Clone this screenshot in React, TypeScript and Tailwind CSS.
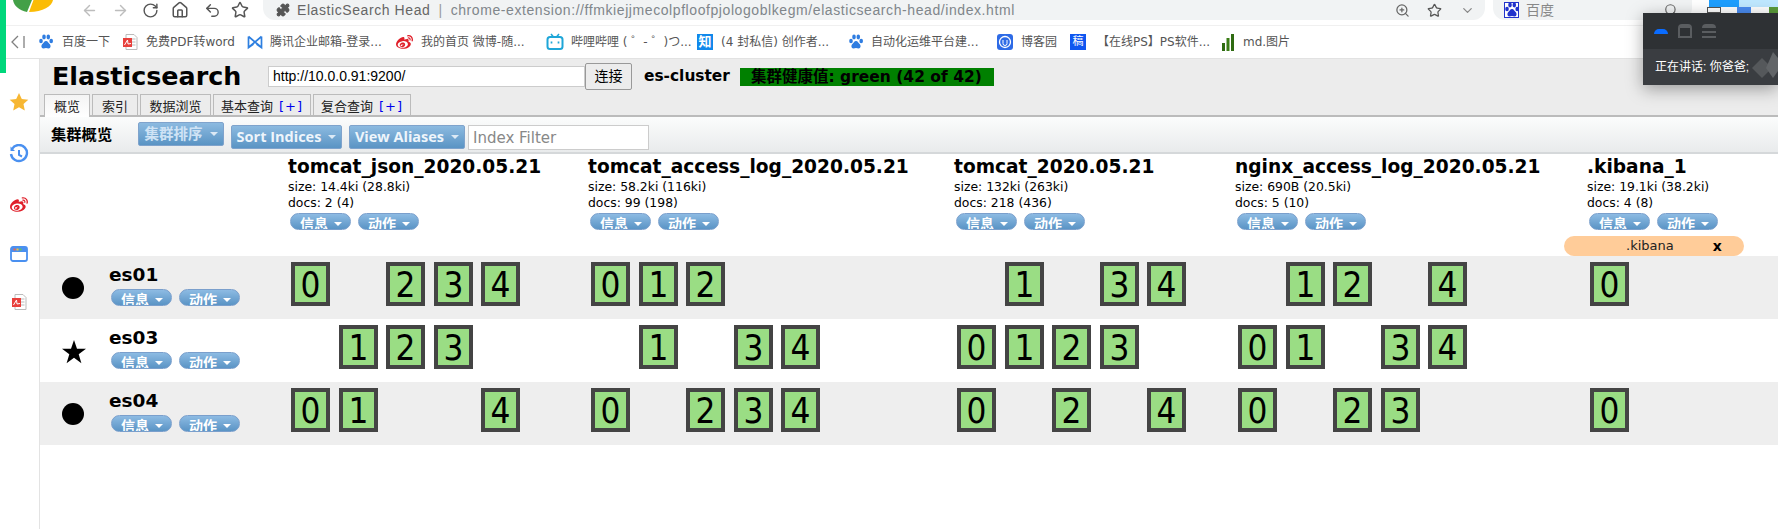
import React from "react";
import { ArrowLeft, ArrowRight, RotateCw, Home, Undo2, Star, Puzzle, ZoomIn, ChevronDown, Search } from "lucide-react";
import { FaWeibo } from "react-icons/fa";

const Paw = ({ c = "#2f7de1" }: { c?: string }) => (
  <svg viewBox="0 0 16 16" className="w-4 h-4 shrink-0">
    <ellipse cx="3" cy="7" rx="1.8" ry="2.3" fill={c} />
    <ellipse cx="6" cy="3" rx="1.8" ry="2.4" fill={c} />
    <ellipse cx="10.3" cy="3" rx="1.8" ry="2.4" fill={c} />
    <ellipse cx="13.2" cy="7" rx="1.8" ry="2.3" fill={c} />
    <path d="M8 7c-2 0-2.2 2-3.6 3-1.4 1-1.4 4.500 1.100 4.500 1 0 1.500-.4 2.500-.4s1.500.4 2.500.4c2.500 0 2.500-3.500 1.100-4.500C10.200 9 10 7 8 7z" fill={c} />
  </svg>
);
const Pdf = () => (
  <svg viewBox="0 0 16 16" className="w-4 h-4 shrink-0">
    <path d="M4 .5h8l3 3v12H4z" fill="#fff" stroke="#bbb" />
    <path d="M10 5h3.500M10 8h3.500M10 11h3.500" stroke="#bbb" />
    <rect x="1" y="4" width="9" height="9" fill="#e8403c" />
    <path d="M2.500 11l3-5 .5 4 3-.5" stroke="#fff" fill="none" />
  </svg>
);
const Tencent = () => (
  <svg viewBox="0 0 16 16" className="w-4 h-4 shrink-0">
    <path d="M1.500 2.500v11l5-3.500M14.500 2.500v11l-5-3.500M1.500 2.500l13 11M14.500 2.500l-13 11" stroke="#2e7fe0" strokeWidth="1.700" fill="none" />
  </svg>
);
const Bili = () => (
  <svg viewBox="0 0 18 18" className="w-[18px] h-[18px] shrink-0">
    <path d="M5 1l2.500 3M13 1l-2.500 3" stroke="#1ea6d8" strokeWidth="1.500" />
    <rect x="1.500" y="4" width="15" height="12" rx="2.500" fill="none" stroke="#1ea6d8" strokeWidth="2" />
    <path d="M5.500 8.500v2M12.500 8.500v2" stroke="#1ea6d8" strokeWidth="1.700" />
  </svg>
);
const Zhihu = () => (
  <div className="w-4 h-4 shrink-0 bg-[#0f88eb] text-white text-[13px] leading-4 text-center font-bold">知</div>
);
const Cnb = () => (
  <svg viewBox="0 0 16 16" className="w-4 h-4 shrink-0">
    <rect width="16" height="16" rx="3" fill="#2e6be6" />
    <circle cx="8" cy="8" r="5.500" fill="none" stroke="#fff" strokeWidth="1.300" />
    <path d="M6 6v3.500a2 2 0 0 0 4 0V6" fill="none" stroke="#fff" />
  </svg>
);
const Gao = () => (
  <div className="w-4 h-4 shrink-0 bg-[#0f56f0] text-white text-[11px] leading-4 text-center">稿</div>
);
const Md = () => (
  <svg viewBox="0 0 12 18" className="w-3 h-[18px] shrink-0">
    <rect x="0" y="10" width="3" height="8" fill="#2f6b12" />
    <rect x="4.500" y="5" width="3" height="13" fill="#3a7d16" />
    <rect x="9" y="1" width="3" height="17" fill="#2f6b12" />
  </svg>
);

const bookmarks = [
  { w: "w-[84px]", g: "gap-[8px]", icon: <Paw />, t: "百度一下" },
  { w: "w-[125px]", g: "gap-[8px]", icon: <Pdf />, t: "免费PDF转word" },
  { w: "w-[149px]", g: "gap-[7px]", icon: <Tencent />, t: "腾讯企业邮箱-登录..." },
  { w: "w-[150px]", g: "gap-[8px]", icon: <FaWeibo className="w-[17px] h-[17px] shrink-0 text-[#e0202a]" />, t: "我的首页 微博-随..." },
  { w: "w-[151px]", g: "gap-[7px]", icon: <Bili />, t: "哔哩哔哩 ( ゜- ゜)つ..." },
  { w: "w-[151px]", g: "gap-[8px]", icon: <Zhihu />, t: "(4 封私信) 创作者..." },
  { w: "w-[149px]", g: "gap-[7px]", icon: <Paw />, t: "自动化运维平台建..." },
  { w: "w-[73px]", g: "gap-[8px]", icon: <Cnb />, t: "博客园" },
  { w: "w-[152px]", g: "gap-[11px]", icon: <Gao />, t: "【在线PS】PS软件..." },
  { w: "w-[90px]", g: "gap-[9px]", icon: <Md />, t: "md.图片" },
];

const Caret = ({ c = "border-t-white" }: { c?: string }) => (
  <span className={`inline-block w-0 h-0 border-x-[4px] border-t-[4px] border-x-transparent ${c}`} />
);

const Pill = ({ t }: { t: string }) => (
  <div className="w-[61px] h-[17px] overflow-hidden rounded-[9px] border border-[#7a9fcc] bg-gradient-to-b from-[#8dbbe3] to-[#5a94c5] flex items-start justify-center gap-[6px] text-white font-bold text-[14px] leading-[14px] pt-[3px] pl-[1px]">
    <span>{t}</span>
    <span className="mt-[5px] flex"><Caret /></span>
  </div>
);

const Pills = () => (
  <div className="flex gap-[7px]">
    <Pill t="信息" />
    <Pill t="动作" />
  </div>
);

const ToolBtn = ({ t, w, top, light }: { t: string; w: string; top: string; light?: boolean }) => (
  <button className={`${w} ${top} h-6 rounded-[2px] border border-[#7fa3cc] bg-gradient-to-b from-[#8cbae0] to-[#5a94c4] font-bold text-[14.5px] whitespace-nowrap font-['Open_Sans','Noto_Sans_CJK_SC',sans-serif] flex items-center justify-center gap-[7px] ${light ? "text-[#cfe3f5]" : "text-[#eef5fb]"}`}>
    <span>{t}</span>
    <Caret c="border-t-[#dce9f5]" />
  </button>
);

const indices = [
  { name: "tomcat_json_2020.05.21", size: "size: 14.4ki (28.8ki)", docs: "docs: 2 (4)" },
  { name: "tomcat_access_log_2020.05.21", size: "size: 58.2ki (116ki)", docs: "docs: 99 (198)" },
  { name: "tomcat_2020.05.21", size: "size: 132ki (263ki)", docs: "docs: 218 (436)" },
  { name: "nginx_access_log_2020.05.21", size: "size: 690B (20.5ki)", docs: "docs: 5 (10)" },
  { name: ".kibana_1", size: "size: 19.1ki (38.2ki)", docs: "docs: 4 (8)" },
];

const nodes = [
  { name: "es01", star: false, bg: "bg-[#eeeeee]", shards: [[0, 2, 3, 4], [0, 1, 2], [1, 3, 4], [1, 2, 4], [0]] },
  { name: "es03", star: true, bg: "bg-white", shards: [[1, 2, 3], [1, 3, 4], [0, 1, 2, 3], [0, 1, 3, 4], []] },
  { name: "es04", star: false, bg: "bg-[#eeeeee]", shards: [[0, 1, 4], [0, 2, 3, 4], [0, 2, 4], [0, 2, 3], [0]] },
];

const Shards = ({ list, slots }: { list: number[]; slots: number }) => (
  <div className="flex pt-[6px]">
    {Array.from({ length: slots }, (_, i) => (
      <div key={i} className="w-[47.5px] shrink-0">
        {list.includes(i) && (
          <div className="w-[39px] h-[44px] border-4 border-[#444444] bg-[#9add84] text-black text-center flex items-center justify-center overflow-hidden">
            <span className="inline-block text-[36px] leading-[36px] scale-x-[0.87] translate-y-[1px]">{i}</span>
          </div>
        )}
      </div>
    ))}
  </div>
);

const grid = "grid grid-cols-[251px_300px_366px_281px_352px_154px]";

export default function App() {
  return (
    <div className="w-[1778px] h-[529px] overflow-hidden relative bg-white font-['DejaVu_Sans','Noto_Sans_CJK_SC',sans-serif] text-black">
      {/* browser address bar */}
      <div className="h-[25px] flex items-start bg-white relative">
        <svg viewBox="0 0 40 12" className="w-10 h-3 ml-[13px] shrink-0">
          <path d="M0 0h19L14 12C6 10 1 6 0 0z" fill="#43a047" />
          <path d="M20.500 0H40C39 6 30 12 16 12z" fill="#fbbc05" />
        </svg>
        <div className="flex items-center h-5 text-[#9a9a9a]">
          <ArrowLeft className="w-[17px] h-[17px] ml-[28px] text-[#bdbdbd]" strokeWidth={2} />
          <ArrowRight className="w-[17px] h-[17px] ml-[14px] text-[#bdbdbd]" strokeWidth={2} />
          <RotateCw className="w-[17px] h-[17px] ml-[13px] text-[#555]" strokeWidth={2} />
          <Home className="w-[18px] h-[18px] ml-[12px] text-[#555]" strokeWidth={2} />
          <Undo2 className="w-[17px] h-[17px] ml-[15px] text-[#555]" strokeWidth={2} />
          <Star className="w-[18px] h-[18px] ml-[10px] text-[#555]" strokeWidth={2} />
        </div>
        <div className="ml-[14px] w-[1222px] h-5 bg-[#f1f3f4] rounded-b-[12px] flex items-center pl-[13px] text-[14px] font-['Liberation_Sans','Noto_Sans_CJK_SC',sans-serif] tracking-[0.58px]">
          <Puzzle className="w-[14px] h-[14px] text-[#555] fill-[#555]" />
          <span className="ml-[7px] text-[#666]">ElasticSearch Head</span>
          <span className="ml-2 text-[#999]">|</span>
          <span className="ml-2 text-[#80868b]">chrome-extension://ffmkiejjmecolpfloofpjologoblkegm/elasticsearch-head/index.html</span>
          <ZoomIn className="w-[15px] h-[15px] text-[#666] ml-auto" />
          <Star className="w-[15px] h-[15px] text-[#555] ml-[17px]" />
          <ChevronDown className="w-[15px] h-[15px] text-[#888] ml-[18px] mr-[10px]" />
        </div>
        <div className="ml-2 w-[199px] h-5 bg-[#f1f3f4] rounded-b-[12px] flex items-center pl-[11px] text-[14px] text-[#888]">
          <div className="w-[15px] h-[16px] border border-[#2233cc] bg-white flex items-center justify-center"><Paw c="#2233cc" /></div>
          <span className="ml-[7px]">百度</span>
          <Search className="w-[14px] h-[14px] text-[#666] ml-auto mr-[14px]" />
        </div>
      </div>
      {/* bookmarks */}
      <div className="h-[34px] border-t border-t-[#f0f0f0] border-b border-b-[#e2e2e2] flex items-center bg-white text-[12px] text-[#555]">
        <div className="w-[38px] pl-[11px] text-[#777] flex items-center">
          <svg viewBox="0 0 14 14" className="w-[14px] h-[14px]">
            <path d="M7 1L1 7l6 6M13 1v12" fill="none" stroke="#808080" strokeWidth="1.300" />
          </svg>
        </div>
        {bookmarks.map((b) => (
          <div key={b.t} className={`${b.w} ${b.g} shrink-0 flex items-center whitespace-nowrap`}>
            {b.icon}
            <span>{b.t}</span>
          </div>
        ))}
      </div>
      {/* page body */}
      <div className="flex h-[470px]">
        <aside className="w-10 shrink-0 border-r border-r-[#e3e3e3] flex flex-col items-center pr-[2px] pt-[33px] gap-[32px]">
          <svg viewBox="0 0 20 20" className="w-5 h-5">
            <path d="M10 1l2.800 6 6.500.7-4.800 4.400 1.300 6.400L10 15.300 4.200 18.500l1.300-6.400L.7 7.700 7.200 7z" fill="#f7b733" />
          </svg>
          <svg viewBox="0 0 20 20" className="w-5 h-5">
            <path d="M3 5a8 8 0 1 1-1 5" fill="none" stroke="#4a90f0" strokeWidth="2.400" />
            <path d="M1.500 2.500v4.500h4.500z" fill="#4a90f0" />
            <path d="M10 6v5l3 1.500" fill="none" stroke="#4a90f0" strokeWidth="2" />
          </svg>
          <FaWeibo className="w-5 h-[18px] text-[#e0202a]" />
          <svg viewBox="0 0 18 16" className="w-[18px] h-4">
            <rect x="1" y="1" width="16" height="14" rx="2" fill="#fff" stroke="#4a90f0" strokeWidth="1.800" />
            <rect x="1" y="1" width="16" height="5" fill="#4a90f0" />
            <rect x="3.500" y="2.500" width="2" height="2" fill="#f06050" />
            <rect x="6.500" y="2.500" width="2" height="2" fill="#f7c033" />
            <rect x="9.500" y="2.500" width="2" height="2" fill="#60c060" />
          </svg>
          <Pdf />
        </aside>
        <main className="flex-1 min-w-0">
          {/* header */}
          <div className="h-[58px] bg-[#ececec] border-b-2 border-b-[#bbbbbb]">
            <div className="h-[35px] flex items-center pl-[12px]">
              <h1 className="w-[216px] text-[25.4px] leading-none font-bold text-black">Elasticsearch</h1>
              <input
                readOnly
                value="http://10.0.0.91:9200/"
                className="w-[317px] h-[21px] bg-white border border-[#cccccc] pl-[4px] text-[14px] font-['Liberation_Sans',sans-serif] text-black outline-none"
              />
              <button className="w-[47px] h-[27px] bg-[#ececec] border border-[#999] rounded-[2px] text-[14px] text-black">连接</button>
              <span className="ml-3 w-[85px] text-[15.4px] font-bold whitespace-nowrap">es-cluster</span>
              <div className="ml-[11px] w-[254px] h-[18px] bg-[#008000] text-[15.5px] leading-[18px] font-bold pl-[11px] whitespace-nowrap">
                集群健康值: green (42 of 42)
              </div>
            </div>
            <div className="h-[22px] flex pl-[4px] gap-[2px] text-[13px] text-[#222]">
              <div className="w-[46px] h-[23px] bg-gradient-to-b from-[#f4f4f4] to-white border border-b-0 border-[#bbbbbb] text-center leading-[24px] relative z-10">概览</div>
              <div className="w-[46px] border border-b-0 border-[#bbbbbb] text-center leading-[24px]">索引</div>
              <div className="w-[71px] border border-b-0 border-[#bbbbbb] text-center leading-[24px]">数据浏览</div>
              <div className="w-[98px] border border-b-0 border-[#bbbbbb] text-center leading-[24px]">基本查询 <span className="text-[#0000ee] tracking-[1px] ml-[2px]">[+]</span></div>
              <div className="w-[98px] border border-b-0 border-[#bbbbbb] text-center leading-[24px]">复合查询 <span className="text-[#0000ee] tracking-[1px] ml-[2px]">[+]</span></div>
            </div>
          </div>
          {/* toolbar */}
          <div className="h-[37px] bg-gradient-to-b from-[#fbfcfc] to-[#e9ebec] border-b-2 border-b-[#d5d8da] flex items-start pl-[11px]">
            <span className="w-[87px] mt-[8px] font-bold text-black text-[15.3px] leading-[20px]">集群概览</span>
            <ToolBtn t="集群排序" w="w-[86px]" top="mt-[5px]" light />
            <ToolBtn t="Sort Indices" w="w-[111px] ml-[7px]" top="mt-[8px]" />
            <ToolBtn t="View Aliases" w="w-[116px] ml-[7px]" top="mt-[8px]" />
            <input
              readOnly
              placeholder="Index Filter"
              className="ml-[3px] mt-[8px] w-[181px] h-[25px] bg-white border border-[#cccccc] pl-[4px] text-[15px] placeholder:text-[#888] outline-none"
            />
          </div>
          {/* cluster table */}
          <div className={`${grid} h-[102px] pt-[3px]`}>
            <div />
            {indices.map((x) => (
              <div key={x.name} className="flex flex-col whitespace-nowrap">
                <div className="-ml-[3px] h-5 text-[18.6px] leading-5 font-bold">{x.name}</div>
                <div className="-ml-[3px] h-4 mt-[2px] text-[12.4px] leading-4">{x.size}</div>
                <div className="-ml-[3px] h-4 text-[12.4px] leading-4">{x.docs}</div>
                <div className="mt-[2px] -ml-[1px]"><Pills /></div>
              </div>
            ))}
          </div>
          <div className="relative">
            <div className="absolute -top-[20px] left-[1524px] w-[180px] h-5 rounded-[10px] bg-[#ffcc99] flex items-center text-[13px] text-[#222]">
              <span className="ml-[62px]">.kibana</span>
              <span className="ml-[39px] font-bold text-[14px] text-black">x</span>
            </div>
          </div>
          {nodes.map((n) => (
            <div key={n.name} className={`${grid} ${n.bg} h-[63px]`}>
              <div className="flex items-start pl-[22px]">
                <div className="w-[47px] pt-[21px]">
                  {n.star ? (
                    <svg viewBox="0 0 24 24" className="w-6 h-6">
                      <path d="M12 0l3 8.700h9l-7.300 5.500 2.700 9-7.400-5.500-7.400 5.500 2.700-9L0 8.700h9z" fill="#000" />
                    </svg>
                  ) : (
                    <svg viewBox="0 0 22 22" className="w-[22px] h-[22px]">
                      <circle cx="11" cy="11" r="11" fill="#000" />
                    </svg>
                  )}
                </div>
                <div className="pt-[9px]">
                  <div className="h-5 text-[18.5px] leading-5 font-bold">{n.name}</div>
                  <div className="mt-[4px] ml-[2px]"><Pills /></div>
                </div>
              </div>
              {n.shards.map((s, i) => (
                <Shards key={i} list={s} slots={i === 4 ? 1 : 5} />
              ))}
            </div>
          ))}
        </main>
      </div>
      {/* green window edge */}
      <div className="absolute left-0 top-0 w-[6px] h-[73px] bg-[#00d77b]" />
      {/* desktop icons top right */}
      <div className="absolute left-[1709px] top-0 w-[30px] h-[7px] bg-[#1e9fff]" />
      <div className="absolute left-[1739px] top-0 w-[39px] h-[7px] bg-[#bfe8ff]" />
      <div className="absolute left-[1707px] top-[7px] w-[14px] h-[6px] border border-[#555] bg-white" />
      <div className="absolute left-[1737px] top-[7px] w-[14px] h-[6px] bg-[#4a8cf0]" />
      <div className="absolute left-[1769px] top-[7px] w-[9px] h-[6px] bg-[#5a9a3a]" />
      {/* floating voice window */}
      <div className="absolute left-[1643px] top-[13px] w-[135px] h-[72px] shadow-[0_4px_16px_rgba(0,0,0,0.35)]">
        <div className="h-9 bg-[#2e3134] flex items-center pl-[11px] gap-[10px]">
          <div className="w-[14px] h-[5px] rounded-t-[5px] bg-[#0a6cff]" />
          <div className="w-[14px] h-[14px] border-2 border-[#5a5d60] rounded-t-[4px] border-t-[4px]" />
          <div className="w-[14px] flex flex-col gap-[3px]">
            <div className="h-[4px] rounded-t-[4px] bg-[#5a5d60]" />
            <div className="h-[2px] bg-[#5a5d60]" />
            <div className="h-[2px] bg-[#5a5d60]" />
          </div>
        </div>
        <div className="h-9 bg-[#3a3d41] flex items-center pl-[12px] text-[12px] text-white whitespace-nowrap relative overflow-hidden">
          <span className="font-['Liberation_Sans','Noto_Sans_CJK_SC',sans-serif]">正在讲话: 你爸爸;</span>
          <svg viewBox="0 0 30 30" className="absolute left-[109px] top-[3px] w-[30px] h-[30px]">
            <path d="M10 6l10 10-10 10L0 16z" fill="#55585b" />
            <path d="M21 0l10 12-10 14-7-10z" fill="#626568" />
          </svg>
        </div>
      </div>
    </div>
  );
}
